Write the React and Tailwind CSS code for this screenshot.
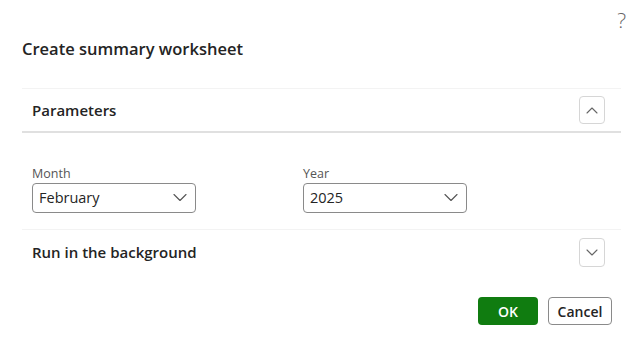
import React from "react";

function Chevron({ up = false, className = "" }) {
  return (
    <svg width="14" height="8" viewBox="0 0 14 8" className={className} fill="none">
      <path
        d={up ? "M1 7.5L7 1.5L13 7.5" : "M1 0.5L7 6.5L13 0.5"}
        stroke="currentColor"
        strokeWidth="1.1"
        strokeLinecap="round"
        strokeLinejoin="round"
      />
    </svg>
  );
}

function SmallChevron({ up = false }) {
  return (
    <svg width="12" height="7" viewBox="0 0 12 7" fill="none">
      <path
        d={up ? "M1 6L6 1L11 6" : "M1 1L6 6L11 1"}
        stroke="currentColor"
        strokeWidth="1.1"
        strokeLinecap="round"
        strokeLinejoin="round"
      />
    </svg>
  );
}

function Select({ label, value }) {
  return (
    <div className="flex flex-col w-[164px]">
      <span className="text-[12.5px] leading-[16px] text-[#555]">{label}</span>
      <div className="mt-[1px] h-[30px] flex items-center justify-between border border-[#8a8a8a] rounded-[4px] pl-[6px] pr-[8px]">
        <span className="text-[14.5px] text-[#242424]">{value}</span>
        <Chevron className="text-[#555]" />
      </div>
    </div>
  );
}

export default function App() {
  return (
    <div
      className="relative w-[643px] h-[343px] bg-white text-[#242424]"
      style={{ fontFamily: '"Open Sans", "Noto Sans", sans-serif' }}
    >
      {/* help */}
      <span className="absolute right-[17px] top-[5px] text-[21px] font-light text-[#666]">?</span>

      <h1 className="pt-[37px] pl-[22px] text-[16.5px] leading-[24px] font-semibold">
        Create summary worksheet
      </h1>

      <div className="mx-[22px] mt-[27px]">
        {/* Parameters section */}
        <div className="border-t border-[#f3f3f3] border-b-2 border-b-[#e0e0e0] h-[45px] flex items-center justify-between pl-[10px] pr-[16px]">
          <span className="text-[15px] font-semibold">Parameters</span>
          <button className="w-[26px] h-[28px] flex items-center justify-center border border-[#d6d6d6] rounded-[4px] text-[#666]">
            <SmallChevron up />
          </button>
        </div>

        <div className="flex gap-[107px] pl-[10px] pt-[33px] pb-[16px]">
          <Select label="Month" value="February" />
          <Select label="Year" value="2025" />
        </div>

        {/* Run in the background */}
        <div className="border-t border-[#f3f3f3] h-[46px] flex items-center justify-between pl-[10px] pr-[16px]">
          <span className="text-[15px] font-semibold">Run in the background</span>
          <button className="w-[26px] h-[29px] flex items-center justify-center border border-[#d6d6d6] rounded-[4px] text-[#666]">
            <SmallChevron />
          </button>
        </div>
      </div>

      <div className="flex justify-end gap-[10px] pr-[31px] mt-[22px]">
        <button className="w-[60px] h-[28px] rounded-[4px] bg-[#107c10] text-white text-[14px] font-semibold">
          OK
        </button>
        <button className="w-[64px] h-[28px] rounded-[4px] border border-[#8a8a8a] bg-white text-[14px] font-semibold text-[#242424]">
          Cancel
        </button>
      </div>
    </div>
  );
}
